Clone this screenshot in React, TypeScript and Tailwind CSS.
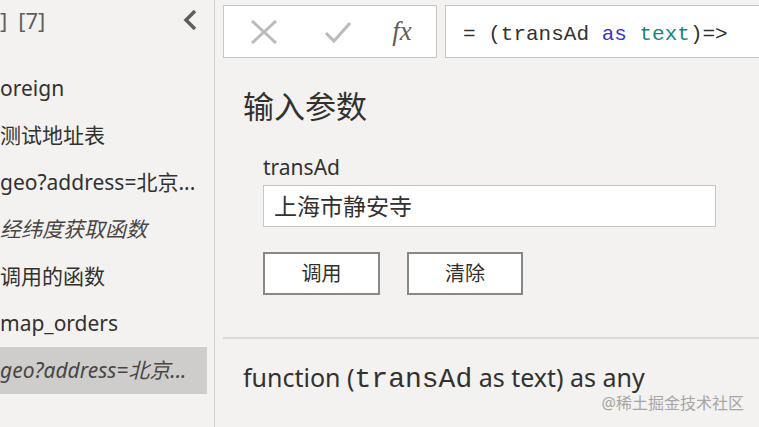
import React from "react"

const sans = "font-['Segoe_UI','Noto_Sans','Noto_Sans_CJK_SC',sans-serif]"
const mono = "font-['Liberation_Mono','DejaVu_Sans_Mono',monospace]"

interface QueryItem {
  label: string
  italic?: boolean
  selected?: boolean
}

const queries: QueryItem[] = [
  { label: "oreign" },
  { label: "测试地址表" },
  { label: "geo?address=北京..." },
  { label: "经纬度获取函数", italic: true },
  { label: "调用的函数" },
  { label: "map_orders" },
  { label: "geo?address=北京...", italic: true, selected: true },
]

function Sidebar() {
  return (
    <aside className="w-[215px] shrink-0 border-r border-[#d2d0ce] overflow-hidden">
      <div className="flex h-[40px] items-center justify-between pr-[16px]">
        <span className="flex text-[22px] text-[#605e5c]">
          <span>]</span>
          <span className="ml-[11px]">[7]</span>
        </span>
        <svg width="16" height="22" viewBox="0 0 16 22" fill="none">
          <polyline points="13,2 4,11 13,20" stroke="#605e5c" strokeWidth="3.5" strokeLinejoin="miter" />
        </svg>
      </div>
      <ul className="mt-[25px]">
        {queries.map((q, i) => (
          <li
            key={i}
            className={`flex h-[47px] w-[207px] items-center whitespace-nowrap text-[21px] ${
              q.selected ? "bg-[#cfcdcb]" : ""
            } ${q.italic ? "italic text-[#484644]" : "text-[#323130]"}`}
          >
            {q.label}
          </li>
        ))}
      </ul>
    </aside>
  )
}

function Toolbar() {
  return (
    <div className="flex h-[53px]">
      <div className="ml-[8px] flex w-[214px] items-center border border-[#c8c6c4] bg-white">
        <div className="flex w-[79px] justify-center">
          <svg width="30" height="24" viewBox="0 0 30 24">
            <path d="M3 1 L27 23 M27 1 L3 23" stroke="#bdbab7" strokeWidth="3" />
          </svg>
        </div>
        <div className="flex w-[70px] justify-center">
          <svg width="28" height="24" viewBox="0 0 28 24">
            <polyline points="2,13 10,21 26,3" fill="none" stroke="#bdbab7" strokeWidth="3" />
          </svg>
        </div>
        <div className="flex w-[58px] justify-center">
          <span className="font-['Liberation_Serif',serif] text-[27px] italic text-[#605e5c]">fx</span>
        </div>
      </div>
      <div className="-mr-[4px] ml-[8px] flex flex-1 items-center border border-[#c8c6c4] bg-white pl-[17px] pt-[6px]">
        <span className={`${mono} whitespace-nowrap text-[21px] text-[#323130]`}>
          = (transAd <span className="text-[#3535cf]">as</span>{" "}
          <span className="text-[#16877a]">text</span>)=&gt;
        </span>
      </div>
    </div>
  )
}

export default function App() {
  return (
    <div className={`${sans} relative flex h-[427px] w-[759px] overflow-hidden bg-[#f3f2f1] text-[#323130]`}>
      <Sidebar />
      <main className="flex min-w-0 flex-1 flex-col pt-[5px]">
        <Toolbar />
        <h2 className="mt-[30px] pl-[28px] text-[31px] leading-[36px]">输入参数</h2>
        <div className="pl-[48px]">
          <label className="mt-[29px] block text-[21px] leading-[28px]">transAd</label>
          <div className="mt-[4px] flex h-[42px] w-[453px] items-center border border-[#c8c6c4] bg-white pl-[10px] text-[23px]">
            上海市静安寺
          </div>
          <div className="mt-[25px] flex gap-[27px]">
            <button className="h-[43px] w-[117px] border-2 border-[#8a8886] bg-white text-[20px]">调用</button>
            <button className="h-[43px] w-[116px] border-2 border-[#8a8886] bg-white text-[20px]">清除</button>
          </div>
        </div>
        <div className="ml-[8px] mt-[42px] h-[2px] bg-[#dcdad8]" />
        <p className="mt-[22px] flex items-baseline whitespace-nowrap pl-[28px] text-[25px] leading-[32px]">
          <span>function (</span>
          <span className={`${mono} text-[28px]`}>transAd</span>
          <span>&nbsp;as text) as any</span>
        </p>
      </main>
      <span className="absolute bottom-[12px] right-[15px] text-[16px] text-[#a8a6a4]">@稀土掘金技术社区</span>
    </div>
  )
}
